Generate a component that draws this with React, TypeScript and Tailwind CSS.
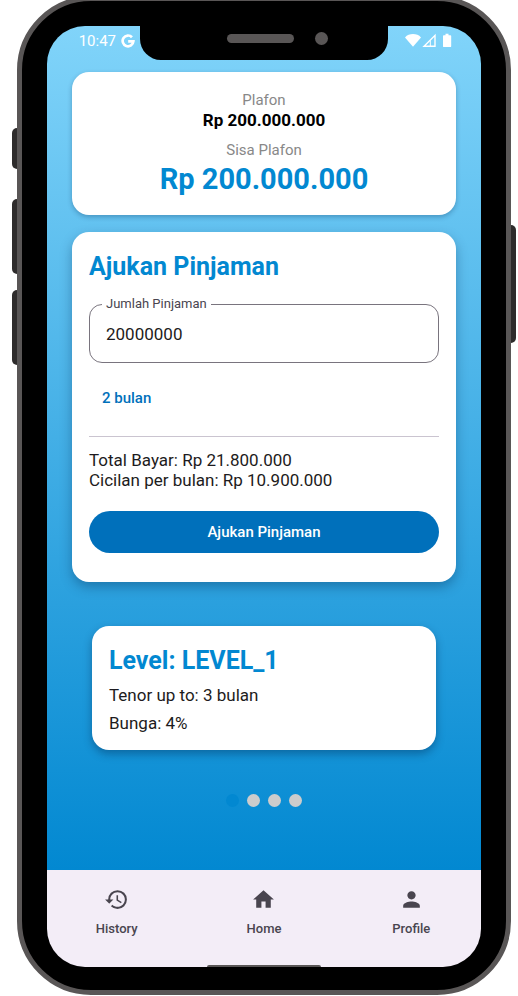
import { useState } from "react";
import { MdHistory, MdHome, MdPerson } from "react-icons/md";

const cardClass = "rounded-[17px] bg-white p-[17px]";

function StatusBar() {
  return (
    <header className="grid h-[34px] grid-cols-[1fr_248px_1fr] text-white">
      <div className="flex h-[30px] items-center justify-end gap-[5px] pr-[5px] text-[15px]">
        <span>10:47</span>
        <svg viewBox="0 0 24 24" className="size-[14px]" fill="none" stroke="currentColor" strokeWidth="4.6">
          <path d="M18.8 5.6A9.2 9.2 0 1 0 21.2 12.6H12.3" />
        </svg>
      </div>
      <div className="flex items-center rounded-b-[21px] bg-black pb-[9px] pl-[87px]">
        <span className="h-[9px] w-[67px] rounded-full bg-[#595656]" />
        <span className="ml-[21px] size-[13px] rounded-full bg-[#595656]" />
      </div>
      <div className="flex h-[30px] items-center pl-[17px]">
        <svg viewBox="0 0 48 16" className="h-[16px] w-[48px]" fill="currentColor" role="img" aria-label="Status">
          <path d="M0 4.4C2 1.9 5 1 8 1s6 .9 8 3.4L8 13.8Z" />
          <path d="M30.7.7V14H17.3Z M29.3 4.1l-8.500 8.500h8.500Z" fillRule="evenodd" />
          <path d="M25.800 7v6h-1V8Z" />
          <path d="M40.5.8h3v1.4h1.8q.9 0 .9.9v10.1q0 .9-.9.9h-6.4q-.9 0-.9-.9V3.100q0-.9.9-.9h1.6Z" />
        </svg>
      </div>
    </header>
  );
}

function CreditCard() {
  return (
    <section className={`${cardClass} text-center shadow-[0_2px_5px_rgba(0,40,80,0.3)]`}>
      <p className="text-[15px] leading-[22px] text-[#888888]">Plafon</p>
      <p className="text-[17px] leading-[19px] font-bold text-black">Rp 200.000.000</p>
      <p className="mt-[9px] text-[15px] leading-[22px] text-[#888888]">Sisa Plafon</p>
      <p className="text-[29px] leading-[37px] font-bold text-[#0288d1]">Rp 200.000.000</p>
    </section>
  );
}

function LoanForm() {
  const [amount, setAmount] = useState("20000000");
  return (
    <form
      className={`${cardClass} pb-[29px] shadow-[0_5px_12px_rgba(0,40,80,0.35)]`}
      onSubmit={(e) => e.preventDefault()}
    >
      <h2 className="text-[25px] leading-[36px] font-bold text-[#0288d1]">Ajukan Pinjaman</h2>
      <div className="relative mt-[19px]">
        <label htmlFor="amount" className="absolute -top-[9px] left-[13px] bg-white px-1 text-[13px] leading-[17px] text-[#49454f]">
          Jumlah Pinjaman
        </label>
        <input
          id="amount"
          inputMode="numeric"
          value={amount}
          onChange={(e) => setAmount(e.target.value)}
          className="block h-[59px] w-full rounded-[13px] border border-[#79747e] px-4 text-[17px] text-[#1d1b20] outline-none"
        />
      </div>
      <select
        aria-label="Tenor"
        defaultValue="2"
        className="mt-[14px] block h-[42px] appearance-none px-[13px] text-[15px] font-medium text-[#0070bb] outline-none"
      >
        <option value="1">1 bulan</option>
        <option value="2">2 bulan</option>
        <option value="3">3 bulan</option>
      </select>
      <hr className="mt-[17px] border-t border-[#cac4d0]" />
      <div className="mt-[13px] text-[17px] leading-[20px] text-[#1d1b20]">
        <p>Total Bayar: Rp 21.800.000</p>
        <p>Cicilan per bulan: Rp 10.900.000</p>
      </div>
      <button type="submit" className="mt-[21px] h-[42px] w-full rounded-full bg-[#0070bb] text-[15px] font-medium text-white">
        Ajukan Pinjaman
      </button>
    </form>
  );
}

function LevelCard() {
  return (
    <section className={`${cardClass} mx-5 shadow-[0_4px_8px_rgba(0,40,80,0.4)]`}>
      <h2 className="text-[25px] leading-[36px] font-bold text-[#0288d1]">Level: LEVEL_1</h2>
      <p className="mt-[6px] text-[17px] leading-[20px] text-[#1d1b20]">Tenor up to: 3 bulan</p>
      <p className="mt-2 text-[17px] leading-[20px] text-[#1d1b20]">Bunga: 4%</p>
    </section>
  );
}

function Pager() {
  const [page, setPage] = useState(0);
  return (
    <div className="flex justify-center gap-2">
      {[0, 1, 2, 3].map((i) => (
        <button
          key={i}
          type="button"
          aria-label={`Level ${i + 1}`}
          onClick={() => setPage(i)}
          className={`size-[13px] rounded-full ${i === page ? "bg-[#0288d1]" : "bg-[#cccccc]"}`}
        />
      ))}
    </div>
  );
}

const tabs = [
  { name: "History", Icon: MdHistory },
  { name: "Home", Icon: MdHome },
  { name: "Profile", Icon: MdPerson },
];

function BottomNav() {
  return (
    <nav className="flex h-[97px] flex-col bg-[#f3edf7] text-[#49454f]">
      <div className="flex flex-1 gap-2 pt-[17px]">
        {tabs.map(({ name, Icon }) => (
          <a key={name} href={`#${name.toLowerCase()}`} className="flex flex-1 flex-col items-center gap-2">
            <Icon className="size-[25px]" />
            <span className="text-[13px] leading-[17px] font-medium">{name}</span>
          </a>
        ))}
      </div>
      <span className="h-[2px] w-[114px] self-center rounded-t-full bg-[#595656]" />
    </nav>
  );
}

export default function App() {
  return (
    <div className="overflow-hidden bg-white pr-[7px] pb-px pl-[17px] font-['Roboto',sans-serif]">
      <div className="relative -mt-1 rounded-[74px] border-[5px] border-[#595656] bg-black px-[25px] pt-[25px] pb-[23px]">
        <span className="absolute top-[127px] -left-[10px] h-[41px] w-[5px] rounded-l-[5px] bg-[#2e2c2c]" />
        <span className="absolute top-[198px] -left-[10px] h-[75px] w-[5px] rounded-l-[5px] bg-[#2e2c2c]" />
        <span className="absolute top-[289px] -left-[10px] h-[75px] w-[5px] rounded-l-[5px] bg-[#2e2c2c]" />
        <span className="absolute top-[224px] -right-[10px] h-[118px] w-[5px] rounded-r-[5px] bg-[#2e2c2c]" />
        <div className="overflow-hidden rounded-[38px]">
          <div className="bg-linear-to-b/srgb from-[#81d4fa] to-[#0288d1]">
            <StatusBar />
            <main className="flex flex-col px-[25px] pt-3 pb-[63px]">
              <div className="flex flex-col gap-[17px]">
                <CreditCard />
                <LoanForm />
              </div>
              <div className="mt-11 flex flex-col gap-11">
                <LevelCard />
                <Pager />
              </div>
            </main>
          </div>
          <BottomNav />
        </div>
      </div>
    </div>
  );
}
